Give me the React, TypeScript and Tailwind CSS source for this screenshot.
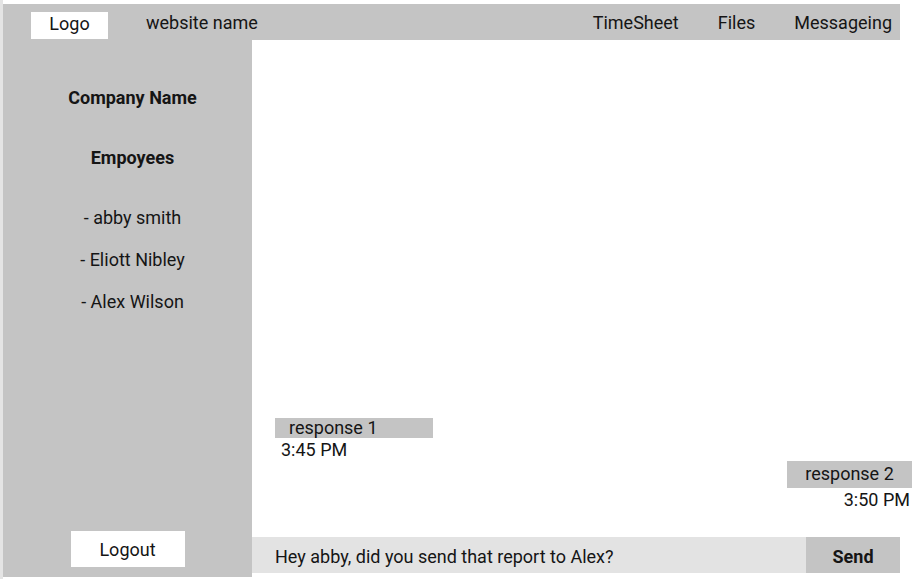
export default function App() {
  return (
    <div className="w-[922px] h-[579px] bg-white flex flex-col text-[18px] text-[#151515] overflow-hidden border-l-[3px] border-[#e4e4e4]" style={{ fontFamily: "Roboto, 'Liberation Sans', sans-serif" }}>
      <div className="mt-[4px] w-[897px] h-[36px] bg-[#c4c4c4] flex items-start shrink-0">
        <div className="ml-[28px] mt-[8px] w-[77px] h-[27px] bg-white flex items-center justify-center leading-none pb-[4px]">Logo</div>
        <div className="ml-[38px] h-[36px] flex items-center leading-none pt-[2px]">website name</div>
        <div className="ml-auto mr-[8px] h-[36px] flex items-center gap-[39px] leading-none pt-[2px]">
          <span>TimeSheet</span>
          <span>Files</span>
          <span>Messageing</span>
        </div>
      </div>
      <div className="flex flex-1">
        <div className="w-[249px] bg-[#c4c4c4] flex flex-col items-center mb-[2px]">
          <div className="pl-[10px] flex flex-col items-center">
            <div className="mt-[48px] h-[20px] leading-[20px] font-bold">Company Name</div>
            <div className="mt-[40px] h-[20px] leading-[20px] font-bold">Empoyees</div>
            <div className="mt-[40px] h-[20px] leading-[20px]">- abby smith</div>
            <div className="mt-[22px] h-[20px] leading-[20px]">- Eliott Nibley</div>
            <div className="mt-[22px] h-[20px] leading-[20px]">- Alex Wilson</div>
          </div>
          <div className="mt-auto mb-[10px] w-[114px] h-[36px] bg-white flex items-center justify-center">Logout</div>
        </div>
        <div className="flex-1 flex flex-col pt-[378px]">
          <div className="ml-[23px] w-[158px] h-[20px] bg-[#c4c4c4] pl-[14px] leading-[20px]">response 1</div>
          <div className="ml-[29px] h-[20px] leading-[20px] pt-[2px]">3:45 PM</div>
          <div className="mt-[3px] self-end mr-[10px] w-[125px] h-[27px] bg-[#c4c4c4] flex items-center justify-center pb-[2px]">response 2</div>
          <div className="self-end mr-[12px] h-[20px] leading-[20px] pt-[2px]">3:50 PM</div>
          <div className="mt-[29px] h-[36px] flex mr-[22px]">
            <div className="flex-1 bg-[#e3e3e3] pl-[23px] flex items-center pt-[2px]">Hey abby, did you send that report to Alex?</div>
            <div className="w-[94px] bg-[#c4c4c4] flex items-center justify-center font-bold pt-[3px]">Send</div>
          </div>
        </div>
      </div>
    </div>
  );
}
